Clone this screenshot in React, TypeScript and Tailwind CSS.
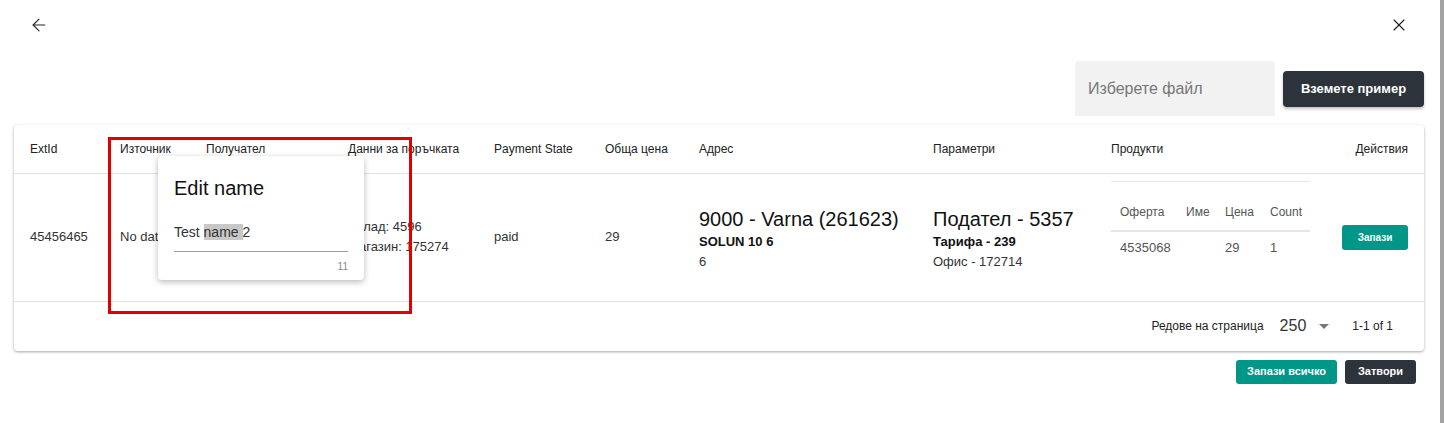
import React from 'react';
import { ArrowLeft, X } from 'lucide-react';

const font = { fontFamily: '"Liberation Sans", Arial, sans-serif' };

const headers = [
  'ExtId',
  'Източник',
  'Получател',
  'Данни за поръчката',
  'Payment State',
  'Обща цена',
  'Адрес',
  'Параметри',
  'Продукти',
];

function ProductsTable() {
  return (
    <table className="table-fixed border-collapse border-t border-[#e6e6e6] w-[199px]">
      <colgroup>
        <col className="w-[66px]" />
        <col className="w-[39px]" />
        <col className="w-[45px]" />
        <col className="w-[49px]" />
      </colgroup>
      <thead>
        <tr className="border-b-2 border-[#e2e7ee]">
          {['Оферта', 'Име', 'Цена', 'Count'].map((h) => (
            <th key={h} className="pl-[9px] pt-[22px] pb-[10px] text-left font-normal text-[12px] leading-4 text-[#555]">
              {h}
            </th>
          ))}
        </tr>
      </thead>
      <tbody>
        <tr className="text-[13px] leading-4 text-[#555]">
          <td className="pl-[9px] pt-[8px] pb-[8px]">4535068</td>
          <td className="pl-[9px]"></td>
          <td className="pl-[9px]">29</td>
          <td className="pl-[9px]">1</td>
        </tr>
      </tbody>
    </table>
  );
}

function EditPopover() {
  return (
    <div className="absolute left-[144px] top-[31px] w-[206px] h-[124px] bg-white rounded-[4px] shadow-[0_2px_6px_rgba(0,0,0,0.28)] px-4 pt-[20px]">
      <div className="text-[20px] leading-6 text-[#111]">Edit name</div>
      <div className="mt-[24px] border-b border-[#9e9e9e] pb-[11px] text-[14px] leading-4 text-[#333]">
        Test <span className="bg-[#c8c8c8]">name </span>2
      </div>
      <div className="mt-[9px] text-right text-[10px] leading-3 text-[#888]">11</div>
    </div>
  );
}

export default function App() {
  return (
    <div className="flex w-[1444px] h-[423px] bg-white overflow-hidden text-[#222]" style={font}>
      <div className="flex-1 flex flex-col pl-[14px] pr-[16px]">
        {/* top bar */}
        <div className="h-[50px] flex items-center justify-between pl-[15px] pr-[15px]">
          <ArrowLeft size={20} strokeWidth={1.3} className="text-[#222]" />
          <X size={20} strokeWidth={1.4} className="text-[#222]" />
        </div>

        {/* file picker */}
        <div className="mt-[11px] flex justify-end items-center gap-2">
          <div className="w-[200px] h-[55px] bg-[#f2f2f2] rounded-t-[4px] flex items-center pl-[13px] text-[16px] text-[#777]">
            Изберете файл
          </div>
          <button className="w-[141px] h-[36px] bg-[#2d333a] rounded-[4px] shadow-[0_2px_3px_rgba(0,0,0,0.25)] text-white font-bold text-[13px]">
            Вземете пример
          </button>
        </div>

        {/* table card */}
        <div className="relative mt-[9px] bg-white rounded-[4px] shadow-[0_1px_3px_rgba(0,0,0,0.35)]">
          <table className="table-fixed w-full border-collapse">
            <colgroup>
              <col className="w-[106px]" />
              <col className="w-[86px]" />
              <col className="w-[142px]" />
              <col className="w-[146px]" />
              <col className="w-[111px]" />
              <col className="w-[94px]" />
              <col className="w-[234px]" />
              <col className="w-[178px]" />
              <col className="w-[215px]" />
              <col />
            </colgroup>
            <thead>
              <tr className="h-[48px] border-b border-[#e0e0e0]">
                {headers.map((h, i) => (
                  <th key={h} className={`${i === 0 ? 'pl-4' : ''} text-left font-normal text-[12px] text-[#222] whitespace-nowrap`}>
                    {h}
                  </th>
                ))}
                <th className="pr-4 text-right font-normal text-[12px] text-[#222]">Действия</th>
              </tr>
            </thead>
            <tbody>
              <tr className="h-[128px] border-b border-[#e0e0e0] text-[13px] text-[#333]">
                <td className="pl-4">45456465</td>
                <td className="whitespace-nowrap">No data</td>
                <td></td>
                <td className="leading-5">
                  <div>Склад: 4596</div>
                  <div>Магазин: 175274</div>
                </td>
                <td>paid</td>
                <td>29</td>
                <td className="pt-[3px]">
                  <div className="text-[20px] leading-[26px] text-[#111]">9000 - Varna (261623)</div>
                  <div className="font-bold leading-5 text-[#111]">SOLUN 10 6</div>
                  <div className="leading-5">6</div>
                </td>
                <td className="pt-[3px]">
                  <div className="text-[20px] leading-[26px] text-[#111]">Подател - 5357</div>
                  <div className="font-bold leading-5 text-[#111]">Тарифа - 239</div>
                  <div className="leading-5">Офис - 172714</div>
                </td>
                <td className="align-top pt-[7px]">
                  <ProductsTable />
                </td>
                <td className="pr-4 text-right">
                  <button className="w-[66px] h-[25px] bg-[#009688] rounded-[3px] text-white font-bold text-[10px]">
                    Запази
                  </button>
                </td>
              </tr>
            </tbody>
          </table>

          {/* pagination */}
          <div className="h-[49px] flex justify-end items-center pr-[31px] text-[12px] text-[#222]">
            <span>Редове на страница</span>
            <span className="ml-4 text-[16px] text-[#333]">250</span>
            <svg width="10" height="5" viewBox="0 0 10 5" className="ml-[13px] mt-[1px]">
              <path d="M0 0 L10 0 L5 5 Z" fill="#777" />
            </svg>
            <span className="ml-[23px]">1-1 of 1</span>
          </div>

          <EditPopover />

          {/* annotation */}
          <div className="absolute left-[94px] top-[12px] w-[304px] h-[177px] border-[3px] border-[#e00000] pointer-events-none" />
        </div>

        {/* bottom actions */}
        <div className="mt-[9px] flex justify-end gap-2 pr-2">
          <button className="w-[101px] h-[24px] bg-[#009688] rounded-[3px] text-white font-bold text-[11px]">
            Запази всичко
          </button>
          <button className="w-[71px] h-[24px] bg-[#2d333a] rounded-[3px] text-white font-bold text-[11px]">
            Затвори
          </button>
        </div>
      </div>

      {/* scrollbar strip */}
      <div className="w-[4px] h-full bg-[#a3a3a3]" />
    </div>
  );
}
